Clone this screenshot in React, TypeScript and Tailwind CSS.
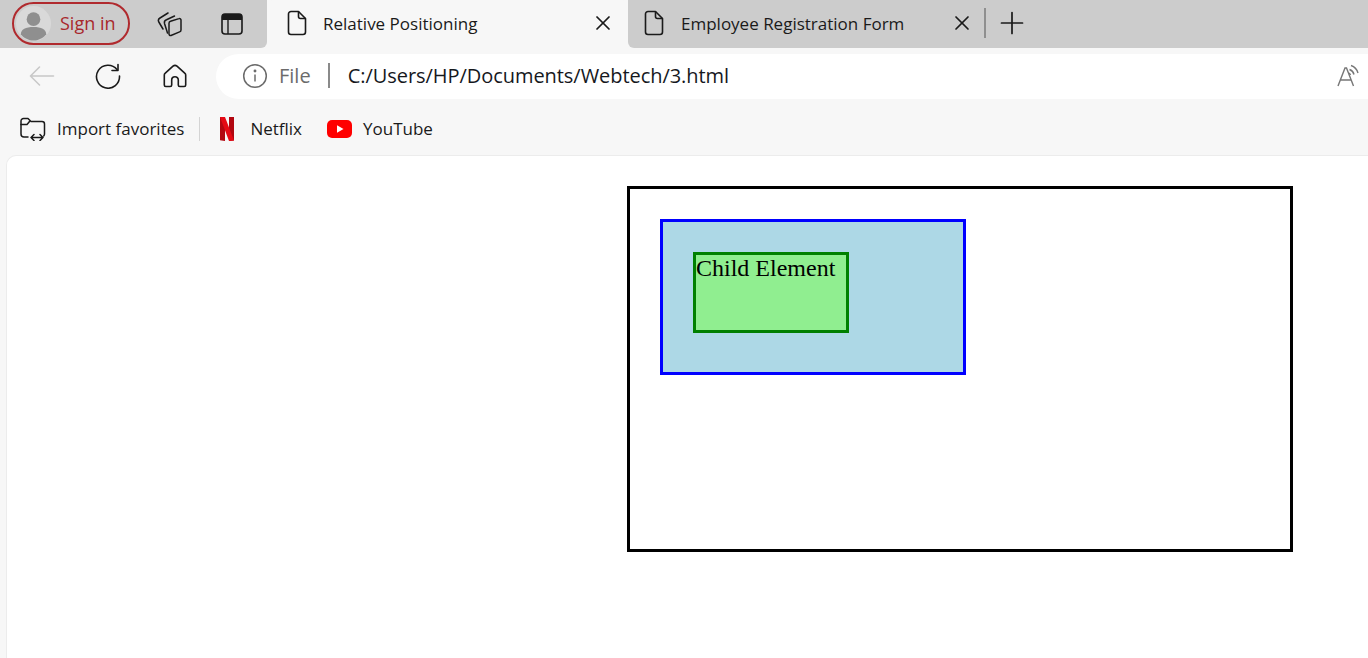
import { X, Plus } from 'lucide-react';

const PageIcon = () => (
  <svg width="20" height="26" viewBox="0 0 20 26" fill="none" stroke="#1a1a1a" strokeWidth="1.6" strokeLinejoin="round">
    <path d="M4 1.5h7.5L18.5 8.5v13.5a2.5 2.5 0 0 1-2.5 2.5H4A2.5 2.5 0 0 1 1.5 22V4A2.5 2.5 0 0 1 4 1.5Z" />
    <path d="M11.5 1.5V6.500a2 2 0 0 0 2 2h5" />
  </svg>
);

const Avatar = () => (
  <svg width="35" height="35" viewBox="0 0 36 36">
    <circle cx="18" cy="18" r="18" fill="#d9d9d9" />
    <circle cx="18" cy="13.5" r="7" fill="#8f8f8f" />
    <path d="M5 29c0-5 5-7.5 13-7.5S31 24 31 29c-3 4-8 6.500-13 6.500S8 33 5 29Z" fill="#8f8f8f" />
  </svg>
);

const Collections = () => (
  <svg width="26" height="26" viewBox="0 0 26 26" fill="none" stroke="#1a1a1a" strokeWidth="1.500" strokeLinecap="round" strokeLinejoin="round">
    <path d="M6 18 1.800 11Q.5 8.500 3 7L11 2" />
    <path d="M10.500 22 7.500 12.500Q6.800 9.800 9.500 8.800L17.500 5" />
    <path d="M13.500 10.300 22 7.600a1.500 1.500 0 0 1 2 1.400v10a2 2 0 0 1-1.400 1.900L14 24.500a1.500 1.500 0 0 1-2-1.400V12.300a2 2 0 0 1 1.500-2Z" />
  </svg>
);

const TabsIcon = () => (
  <svg width="22" height="22" viewBox="0 0 22 22" fill="none">
    <rect x="1" y="1" width="20" height="20" rx="3" stroke="#1a1a1a" strokeWidth="1.600" />
    <path d="M1 4a3 3 0 0 1 3-3h14a3 3 0 0 1 3 3v3H1Z" fill="#1a1a1a" />
    <path d="M7 7v14" stroke="#1a1a1a" strokeWidth="1.400" />
  </svg>
);

const BackIcon = () => (
  <svg width="26" height="22" viewBox="0 0 26 22" fill="none" stroke="#c8c8c8" strokeWidth="1.600" strokeLinecap="round" strokeLinejoin="round">
    <path d="M1.500 11h23M10.500 2 1.500 11l9 9" />
  </svg>
);

const ReloadIcon = () => (
  <svg width="26" height="26" viewBox="0 0 26 26" fill="none" stroke="#1a1a1a" strokeWidth="1.600" strokeLinecap="round" strokeLinejoin="round">
    <path d="M22 6.500A11.500 11.500 0 1 0 24.500 13" />
    <path d="M23 1.500v6h-6" />
  </svg>
);

const HomeIcon = () => (
  <svg width="24" height="24" viewBox="0 0 24 24" fill="none" stroke="#1a1a1a" strokeWidth="1.600" strokeLinejoin="round">
    <path d="M10 2.200a3 3 0 0 1 4 0l8 7.200a2 2 0 0 1 .7 1.500V21a1.500 1.500 0 0 1-1.500 1.500h-4.400A1.500 1.500 0 0 1 15.300 21v-5a3.300 3.300 0 0 0-6.600 0v5a1.500 1.500 0 0 1-1.500 1.500H2.800A1.500 1.500 0 0 1 1.300 21V10.900a2 2 0 0 1 .7-1.500Z" />
  </svg>
);

const InfoIcon = () => (
  <svg width="26" height="26" viewBox="0 0 26 26" fill="none" stroke="#6b6b6b" strokeWidth="1.500">
    <circle cx="13" cy="13" r="11.300" />
    <path d="M13 11.500v7" />
    <circle cx="13" cy="8" r="0.700" fill="#6b6b6b" />
  </svg>
);

const ReadAloud = () => (
  <svg width="24" height="24" viewBox="0 0 24 24" fill="none" stroke="#777777" strokeWidth="1.400">
    <path d="M1 22 8 4l1.500 0L16.500 22M3.500 16h11" />
    <path d="M12.500 5.500a7 7 0 0 1 4.500 5M14 1.500a11 11 0 0 1 7 7.500M11.500 9a3 3 0 0 1 2 2" />
  </svg>
);

const ImportIcon = () => (
  <svg width="26" height="24" viewBox="0 0 26 24" fill="none" stroke="#1a1a1a" strokeWidth="1.500" strokeLinecap="round" strokeLinejoin="round">
    <path d="M8 20H4a3 3 0 0 1-3-3V4a2.500 2.500 0 0 1 2.500-2.500h4.500L11 4.500h11A2.500 2.500 0 0 1 24.500 7v10a3 3 0 0 1-.8 2" />
    <path d="M1 7.500h6L9.500 4.500" />
    <path d="M11 20.500h12M14 17.500l-3 3 3 3M20 17.500l3 3-3 3" />
  </svg>
);

const NetflixLogo = () => (
  <svg width="14" height="24" viewBox="0 0 14 24">
    <path d="M0 0h5v24l-5-.7Z" fill="#b20710" />
    <path d="M9 0h5v23.500L9 24Z" fill="#b20710" />
    <path d="M0 0h5l9 23.500-5 .5Z" fill="#e50914" />
  </svg>
);

const YouTubeLogo = () => (
  <svg width="25" height="18" viewBox="0 0 25 18">
    <rect width="25" height="18" rx="5" fill="#ff0000" />
    <path d="M10 5.200v7.600L16.500 9Z" fill="#ffffff" />
  </svg>
);

export default function App() {
  return (
    <div className="h-[658px] w-[1368px] overflow-hidden bg-[#f7f7f7] font-['Open_Sans','Noto_Sans',sans-serif] text-[#1a1a1a]">
      {/* tab strip */}
      <div className="flex h-[48px] items-stretch">
        <div className="flex w-[267px] items-center rounded-br-[6px] bg-[#cccccc] pb-[1px] pl-3">
          <div className="flex h-[43px] w-[118px] items-center rounded-full border-2 border-[#b02a2e] pl-[2px]">
            <Avatar />
            <span className="ml-[9px] text-[18px] text-[#a8282c]">Sign in</span>
          </div>
          <div className="ml-[27px]"><Collections /></div>
          <div className="ml-[38px]"><TabsIcon /></div>
        </div>
        <div className="flex w-[361px] items-center rounded-t-[8px] bg-[#f7f7f7] pb-[2px] pl-[20px] pr-[13px]">
          <PageIcon />
          <span className="ml-[16px] flex-1 text-[17px] leading-none">Relative Positioning</span>
          <X size={24} strokeWidth={1.7} />
        </div>
        <div className="flex flex-1 items-center rounded-bl-[6px] bg-[#cccccc] pb-[2px]">
          <div className="flex w-[356px] items-center pl-[16px] pr-[10px]">
            <PageIcon />
            <span className="ml-[17px] flex-1 text-[17px] leading-none">Employee Registration Form</span>
            <X size={24} strokeWidth={1.7} />
          </div>
          <div className="h-[30px] w-[2px] bg-[#8f8f8f]" />
          <Plus size={36} strokeWidth={1.15} className="ml-[8px]" />
        </div>
      </div>

      {/* toolbar */}
      <div className="flex h-[57px] items-center pl-[29px]">
        <div className="mb-[2px]"><BackIcon /></div>
        <div className="mb-[2px] ml-[40px]"><ReloadIcon /></div>
        <div className="mb-[2px] ml-[42px]"><HomeIcon /></div>
        <div className="ml-[29px] flex h-[45px] flex-1 items-center rounded-l-full bg-white pb-[2px] pl-[26px]">
          <InfoIcon />
          <span className="ml-[11px] text-[20px] text-[#6b6b6b]">File</span>
          <div className="ml-[17px] h-[25px] w-[2px] bg-[#8a8a8a]" />
          <span className="ml-[18px] text-[20px] tracking-[-0.05px] text-[#16181d]">C:/Users/HP/Documents/Webtech/3.html</span>
          <div className="ml-auto mr-[7px]"><ReadAloud /></div>
        </div>
      </div>

      {/* favorites bar */}
      <div className="flex h-[50px] items-center pb-[2px] pl-[20px] text-[17px]">
        <ImportIcon />
        <span className="ml-[11px]">Import favorites</span>
        <div className="ml-[15px] h-[24px] w-px bg-[#d4d4d4]" />
        <div className="ml-[20px]"><NetflixLogo /></div>
        <span className="ml-[16px]">Netflix</span>
        <div className="ml-[25px]"><YouTubeLogo /></div>
        <span className="ml-[11px]">YouTube</span>
      </div>

      {/* page */}
      <div className="ml-[6px] h-[503px] rounded-tl-[10px] border-l border-t border-[#ececec] bg-white pl-[620px] pt-[30px] font-['Liberation_Serif',serif] text-[24px] leading-[27px] text-black">
        <div className="box-content h-[300px] w-[600px] border-[3px] border-black p-[30px]">
          <div className="box-content h-[90px] w-[240px] border-[3px] border-[#0000ff] bg-[#add8e6] p-[30px]">
            <div className="box-content h-[75px] w-[150px] border-[3px] border-[#008000] bg-[#90ee90]">
              Child Element
            </div>
          </div>
        </div>
      </div>
    </div>
  );
}
